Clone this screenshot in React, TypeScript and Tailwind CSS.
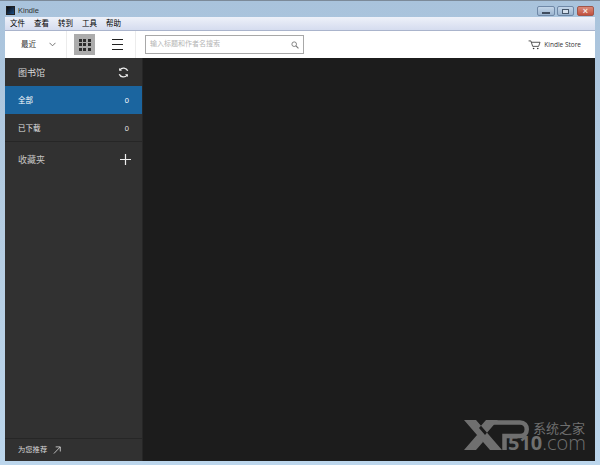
import React from "react";

const cjk = { fontFamily: '"Liberation Sans", "Noto Sans CJK SC", sans-serif' };

function WindowButtons() {
  return (
    <div className="mt-[6px] flex h-[10px] items-stretch">
      <div className="flex w-[18px] items-end justify-center rounded-[2px] border border-[#7089a8] bg-gradient-to-b from-[#c3d5e8] to-[#9bb4cf] pb-[1px]">
        <div className="h-[2px] w-[8px] bg-[#3f4c5e]" />
      </div>
      <div className="ml-[2px] flex w-[17px] items-center justify-center rounded-[2px] border border-[#7089a8] bg-gradient-to-b from-[#c3d5e8] to-[#9bb4cf]">
        <div className="h-[5px] w-[7px] border border-[#46566a] bg-[#d5e0ec]" />
      </div>
      <div className="ml-[3px] flex w-[17px] items-center justify-center rounded-[2px] border border-[#a0564a] bg-gradient-to-b from-[#d98a7a] to-[#c2503e] text-[9px] font-bold leading-none text-[#f4e6e2]">
        ×
      </div>
    </div>
  );
}

function Toolbar() {
  return (
    <div className="flex h-[27px] items-center bg-white">
      <div className="flex h-full w-[62px] items-center border-r border-[#ececec] pl-[16px]">
        <span className="w-[28px] text-[7.5px] text-[#333]">最近</span>
        <svg width="7" height="5" viewBox="0 0 7 5">
          <path d="M0.5 0.8l3 3 3-3" fill="none" stroke="#666" strokeWidth="0.9" />
        </svg>
      </div>
      <div className="flex h-full w-[69px] items-center border-r border-[#ececec] pl-[7px]">
        <div className="grid h-[21px] w-[21px] grid-cols-3 content-center justify-center gap-[1.5px] bg-[#acacac] px-[4.5px]">
          {Array.from({ length: 9 }).map((_, i) => (
            <div key={i} className="h-[3px] w-[3px] bg-[#2d2d2d]" />
          ))}
        </div>
        <div className="ml-[17px] flex flex-col gap-[4px]">
          <div className="h-[1px] w-[11px] bg-[#222]" />
          <div className="h-[1px] w-[11px] bg-[#222]" />
          <div className="h-[1px] w-[11px] bg-[#222]" />
        </div>
      </div>
      <div className="ml-[9px] flex h-[19px] w-[159px] items-center justify-between border border-[#a8a8a8] pl-[4px] pr-[4px]">
        <span className="text-[7px] text-[#b5b5b5]">输入标题和作者名搜索</span>
        <svg width="8" height="8" viewBox="0 0 9 9">
          <circle cx="3.6" cy="3.6" r="2.6" fill="none" stroke="#777" strokeWidth="1" />
          <path d="M5.6 5.6L8.4 8.4" stroke="#777" strokeWidth="1.2" />
        </svg>
      </div>
      <div className="ml-auto mr-[14px] flex items-center gap-[3px]">
        <svg width="13" height="10" viewBox="0 0 14 11">
          <path d="M0.5 1h2.5l2 6h6.5l1.6-4.5H3.6" fill="none" stroke="#333" strokeWidth="0.9" />
          <circle cx="6" cy="9.4" r="0.9" fill="#333" />
          <circle cx="10.6" cy="9.4" r="0.9" fill="#333" />
        </svg>
        <span className="text-[6.5px] text-[#333]" style={{ fontFamily: '"Open Sans", sans-serif' }}>
          Kindle Store
        </span>
      </div>
    </div>
  );
}

function Sidebar() {
  return (
    <div className="flex w-[138px] shrink-0 flex-col border-r border-[#262626] bg-[#313131] text-[#e8e8e8]">
      <div className="flex h-[28px] items-center justify-between pl-[13px] pr-[13px]">
        <span className="pt-[3px] text-[9px] text-[#d8d8d8]">图书馆</span>
        <svg width="11" height="11" viewBox="0 0 12 12">
          <path d="M10.6 4.2A5 5 0 0 0 2 3.2M1.4 7.8A5 5 0 0 0 10 8.8" fill="none" stroke="#eee" strokeWidth="1.5" />
          <path d="M1.2 1v3.2h3.2zM10.8 11V7.8H7.6z" fill="#eee" />
        </svg>
      </div>
      <div className="flex h-[28px] items-center justify-between bg-[#1b659f] pl-[13px] pr-[13px] pt-[2px] text-[7.5px] text-white">
        <span>全部</span>
        <span>0</span>
      </div>
      <div className="flex h-[28px] items-center justify-between border-b border-[#262626] pl-[13px] pr-[13px] pt-[2px] text-[7.5px] text-[#e4e4e4]">
        <span>已下载</span>
        <span>0</span>
      </div>
      <div className="flex h-[35px] items-center justify-between pb-[1px] pl-[13px] pr-[11px]">
        <span className="pt-[3px] text-[9px] text-[#c4c4c4]">收藏夹</span>
        <svg width="11" height="11" viewBox="0 0 11 11">
          <path d="M5.5 0v11M0 5.5h11" stroke="#eee" strokeWidth="1.2" />
        </svg>
      </div>
      <div className="mt-auto flex h-[23px] items-center gap-[6px] border-t border-[#262626] pl-[13px] text-[7.3px] text-[#d8d8d8]">
        <span>为您推荐</span>
        <svg width="8" height="8" viewBox="0 0 9 9">
          <path d="M1 8.5L8 1.2M3 1h5.2v5.2" fill="none" stroke="#ddd" strokeWidth="0.9" />
        </svg>
      </div>
    </div>
  );
}

function Watermark() {
  return (
    <div className="absolute bottom-[10px] right-[10px] h-[33px] w-[122px] text-[#6f6f6f]">
      {/* XP logo mark */}
      <svg width="70" height="33" viewBox="0 0 70 33" className="absolute left-0 top-0">
        <path d="M1 2h12l26 30H27zM35 2H23l-7 8 6 7zM1 32h12l7-8-6-7z" fill="#6f6f6f" />
        <path d="M30 4.5h27c9 0 9 13.5 0 13.5H41.5v14" fill="none" stroke="#6f6f6f" strokeWidth="4.5" />
      </svg>
      <span className="absolute left-[70px] top-[5px] text-[13px] leading-[11px]">系统之家</span>
      <div
        className="absolute left-[45px] top-[16px] flex items-baseline text-[20px] leading-[18px]"
        style={{ fontFamily: '"Open Sans", sans-serif' }}
      >
        <span className="font-bold">510</span>
        <span className="font-light">.com</span>
      </div>
    </div>
  );
}

export default function App() {
  return (
    <div
      className="flex h-[465px] w-[600px] flex-col overflow-hidden bg-gradient-to-b from-[#a9c3dc] via-[#b5cde2] to-[#bcd6ec] px-[5px] pb-[4px]"
      style={cjk}
    >
      <div className="-mx-[5px] flex h-[17px] items-start justify-between border-t border-[#7c8a99] px-[5px]">
        <div className="flex items-center pt-[5px]">
          <div className="ml-[1px] h-[9px] w-[9px] border border-[#222] bg-gradient-to-br from-[#0b0b0b] to-[#1a4f8a]" />
          <span className="ml-[3px] text-[7.5px] leading-[9px] text-[#333]">Kindle</span>
        </div>
        <div className="mr-[1px] -mt-[1px]">
          <WindowButtons />
        </div>
      </div>
      <div className="flex h-[14px] items-center gap-[9px] border-b border-[#aab4cc] bg-gradient-to-b from-[#eef1f9] to-[#d5dcef] pl-[5px] text-[7.5px] text-black">
        <span>文件</span>
        <span>查看</span>
        <span>转到</span>
        <span>工具</span>
        <span>帮助</span>
      </div>
      <Toolbar />
      <div className="relative flex min-h-0 flex-1 bg-[#1c1c1c]">
        <Sidebar />
        <div className="flex-1" />
        <Watermark />
      </div>
    </div>
  );
}
